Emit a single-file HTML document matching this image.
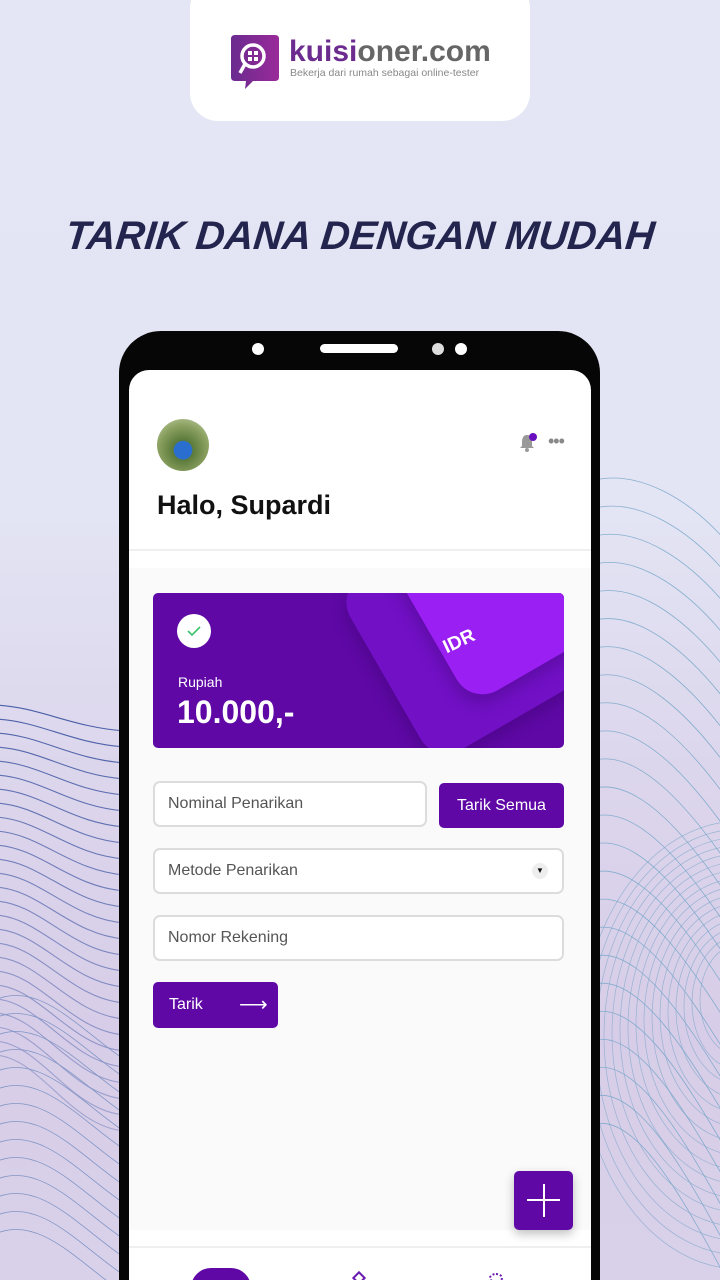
<!DOCTYPE html>
<html><head><meta charset="utf-8"><style>
*{margin:0;padding:0;box-sizing:border-box}
html{width:720px;height:1280px;overflow:hidden}
body{width:720px;height:1280px;overflow:hidden;position:relative;font-family:"Liberation Sans",sans-serif;background:linear-gradient(180deg,#e4e6f5 0%,#e3e4f4 40%,#dcd6ec 60%,#d7cde8 80%,#d9d0e9 100%)}
#bg{position:absolute;left:0;top:0}
.logo{position:absolute;left:190px;top:-20px;width:340px;height:141px;background:#fff;border-radius:28px}
.title{position:absolute;left:0;width:720px;top:214px;text-align:center;font-size:40px;font-weight:bold;font-style:italic;color:#23254f;letter-spacing:0px;transform:skewX(-6deg)}
.phone{position:absolute;left:119px;top:331px;width:481px;height:949px;background:#060606;border-radius:42px 42px 0 0}
.screen{position:absolute;left:129px;top:370px;width:462px;height:910px;background:#fff;border-radius:20px 20px 0 0;overflow:hidden}
.abs{position:absolute}
.inp{position:absolute;background:#fff;border:2px solid #dcdcdc;border-radius:7px;font-size:16px;color:#555;padding-left:13px;display:flex;align-items:center}
.btn{position:absolute;background:#5f08a6;border-radius:5px;color:#fff;font-size:16px;display:flex;align-items:center}
</style></head><body>
<svg id="bg" width="720" height="1280"></svg>
<div class="logo">
<svg class="abs" style="left:41px;top:53px" width="50" height="57" viewBox="0 0 50 57"><defs><linearGradient id="lg" x1="0" x2="1"><stop offset="0" stop-color="#6a2b8f"/><stop offset="1" stop-color="#9a2a9a"/></linearGradient></defs><path d="M4 2 H44 Q48 2 48 6 V44 Q48 48 44 48 H22 L14 56 L15 48 H4 Q0 48 0 44 V6 Q0 2 4 2Z" fill="url(#lg)"/><circle cx="22" cy="23" r="11" fill="none" stroke="#fff" stroke-width="3.5"/><line x1="14" y1="31" x2="9" y2="40" stroke="#fff" stroke-width="3.5"/><rect x="17" y="18" width="4" height="4" fill="#fff"/><rect x="23" y="18" width="4" height="4" fill="#fff"/><rect x="17" y="24" width="4" height="4" fill="#fff"/><rect x="23" y="24" width="4" height="4" fill="#fff"/></svg>
<div class="abs" style="left:99px;top:55px;font-size:30px;font-weight:bold;color:#666"><span style="color:#6c2b8e">kuisi</span>oner.com</div>
<div class="abs" style="left:100px;top:87px;font-size:10.5px;color:#888">Bekerja dari rumah sebagai online-tester</div>
</div>
<div class="title">TARIK DANA DENGAN MUDAH</div>
<div class="phone"></div>
<div class="abs" style="left:252px;top:343px;width:12px;height:12px;border-radius:50%;background:#fff"></div>
<div class="abs" style="left:320px;top:344px;width:78px;height:9px;border-radius:5px;background:#fff"></div>
<div class="abs" style="left:432px;top:343px;width:12px;height:12px;border-radius:50%;background:#ddd"></div>
<div class="abs" style="left:455px;top:343px;width:12px;height:12px;border-radius:50%;background:#fff"></div>
<div class="screen">
 <div class="abs" style="left:28px;top:49px;width:52px;height:52px;border-radius:50%;background:radial-gradient(circle at 50% 60%,#2a6fd0 0 22%,#5b7a3a 24%,#8aa060 60%,#c9d6b0 100%)"></div>
 <svg class="abs" style="left:389px;top:62px" width="20" height="22" viewBox="0 0 20 22"><path d="M9 3 C5 3 4 7 4 10 V14 L2 16 H16 L14 14 V10 C14 7 13 3 9 3Z" fill="#999"/><circle cx="9" cy="18" r="2" fill="#999"/><circle cx="15" cy="5" r="4" fill="#6a0fc0"/></svg>
 <div class="abs" style="left:419px;top:66px;font-size:18px;color:#888;letter-spacing:-1px;line-height:10px">•••</div>
 <div class="abs" style="left:28px;top:120px;font-size:27px;font-weight:bold;color:#111">Halo, Supardi</div>
 <div class="abs" style="left:0;top:179px;width:462px;height:2px;background:#efefef"></div>
 <div class="abs" style="left:0;top:198px;width:462px;height:662px;background:#fafafa"></div>
 <div class="abs" style="left:24px;top:223px;width:411px;height:155px;border-radius:5px;background:#5f08a6;overflow:hidden">
  <div class="abs" style="left:215px;top:-80px;width:260px;height:200px;border-radius:30px;background:#7210c6;transform:rotate(-30deg);box-shadow:-6px 8px 14px rgba(40,0,80,.25)"></div>
  <div class="abs" style="left:255px;top:-125px;width:240px;height:190px;border-radius:30px;background:#9a1ff2;transform:rotate(-30deg);box-shadow:-6px 8px 14px rgba(40,0,80,.25)"></div>
  <div class="abs" style="left:290px;top:38px;color:#fff;font-weight:bold;font-size:19px;transform:rotate(-25deg)">IDR</div>
  <div class="abs" style="left:24px;top:21px;width:34px;height:34px;border-radius:50%;background:#fff"></div>
  <svg class="abs" style="left:33px;top:31px" width="16" height="14"><path d="M2 7 L6 11 L14 3" stroke="#3cc46a" stroke-width="1.6" fill="none"/></svg>
  <div class="abs" style="left:25px;top:81px;color:#fff;font-size:14px">Rupiah</div>
  <div class="abs" style="left:24px;top:101px;color:#fff;font-size:32px;font-weight:bold">10.000,-</div>
 </div>
 <div class="inp" style="left:24px;top:411px;width:274px;height:46px">Nominal Penarikan</div>
 <div class="btn" style="left:310px;top:413px;width:125px;height:45px;justify-content:center">Tarik Semua</div>
 <div class="inp" style="left:24px;top:478px;width:411px;height:46px">Metode Penarikan
  <div class="abs" style="left:377px;top:13px;width:16px;height:16px;border-radius:50%;background:#eee;font-size:8px;color:#111;text-align:center;line-height:16px">▼</div></div>
 <div class="inp" style="left:24px;top:545px;width:411px;height:46px">Nomor Rekening</div>
 <div class="btn" style="left:24px;top:612px;width:125px;height:46px;padding-left:16px">Tarik<span style="position:absolute;left:86px;top:10px;font-size:20px">⟶</span></div>
 <div class="abs" style="left:385px;top:801px;width:59px;height:59px;border-radius:5px;background:#5f08a6;box-shadow:0 4px 10px rgba(0,0,0,.25)"></div>
 <div class="abs" style="left:398px;top:829px;width:33px;height:2px;background:#fff"></div>
 <div class="abs" style="left:414px;top:814px;width:2px;height:33px;background:#fff"></div>
 <div class="abs" style="left:0;top:876px;width:462px;height:2px;background:#efefef"></div>
 <div class="abs" style="left:62px;top:898px;width:60px;height:40px;border-radius:20px;background:#5f08a6"></div>
 <div class="abs" style="left:225px;top:903px;width:10px;height:10px;border:2px solid #6a1ab0;transform:rotate(45deg)"></div>
 <div class="abs" style="left:360px;top:903px;width:14px;height:10px;border:2px dotted #6a1ab0;border-radius:50%"></div>
</div>
<script>
var s=document.getElementById('bg'),h='';
for(var i=0;i<26;i++){var y=705+i*14,d=22+i*2;h+='<path d="M-5 '+y+' C40 '+(y+2)+' 70 '+(y+d)+' 125 '+(y+d+4)+'" stroke="#4a5fa8" stroke-width="1.1" fill="none" opacity="'+(1-i*0.025)+'"/>';}
for(var i=0;i<14;i++){var y=1000+i*18;h+='<path d="M-5 '+y+' C40 '+(y-20)+' 80 '+(y+30)+' 125 '+(y+60)+'" stroke="#7f95c4" stroke-width="0.8" fill="none"/>';}
for(var i=0;i<24;i++){var y=480+i*28;h+='<path d="M595 '+y+' C640 '+(y-10)+' 690 '+(y+20+i*3)+' 725 '+(y+60+i*4)+'" stroke="#6fa3c6" stroke-width="0.8" fill="none" opacity="0.8"/>';}
for(var i=0;i<16;i++){var r=40+i*8;h+='<ellipse cx="740" cy="'+(1000+i*3)+'" rx="'+r+'" ry="'+(r*1.4)+'" stroke="#7aa6c8" stroke-width="0.7" fill="none" opacity="0.7"/>';}
s.innerHTML=h;
</script>
</body></html>
